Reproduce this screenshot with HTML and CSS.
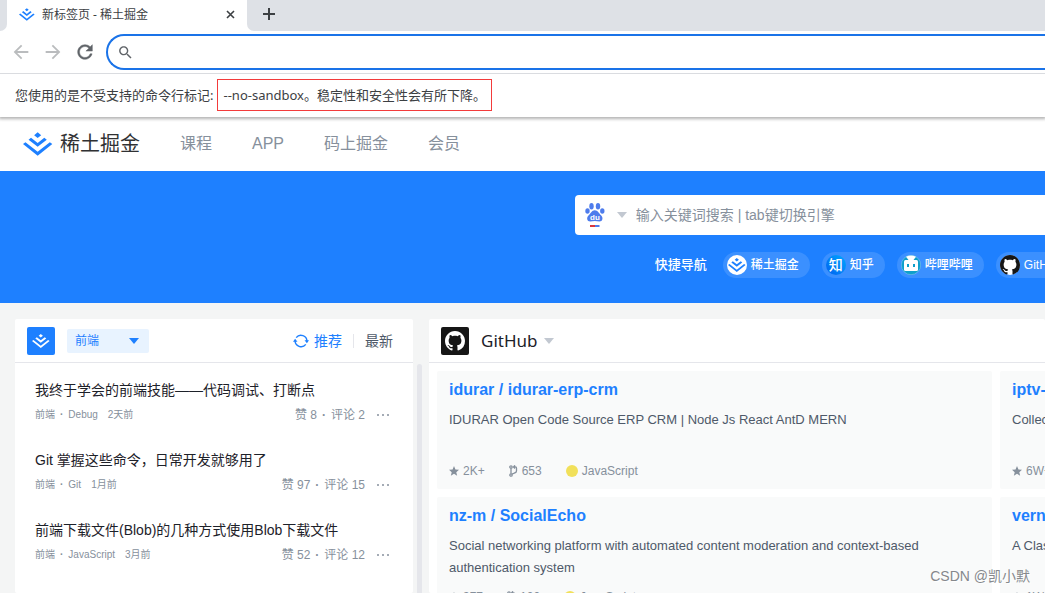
FILE: index.html
```html
<!DOCTYPE html>
<html lang="zh-CN">
<head>
<meta charset="utf-8">
<title>新标签页 - 稀土掘金</title>
<link rel="stylesheet" href="styles.css">
</head>
<body>
<svg class="sprite" aria-hidden="true">
  <symbol id="juejin" viewBox="0 0 36 28"><path d="M17.59 6.77L21.82 3.4L17.59 0L13.36 3.4ZM17.59 17.4L28.52 8.77L25.55 6.39L17.59 12.68L9.62 6.4L6.66 8.78ZM17.58 23.29L32.21 11.75L35.18 14.13L17.59 28L0 14.13L2.96 11.75Z"/></symbol>
  <symbol id="github" viewBox="0 0 16 16"><path d="M8 0C3.58 0 0 3.58 0 8c0 3.54 2.29 6.53 5.47 7.59.4.07.55-.17.55-.38 0-.19-.01-.82-.01-1.49-2.01.37-2.53-.49-2.69-.94-.09-.23-.48-.94-.82-1.13-.28-.15-.68-.52-.01-.53.63-.01 1.08.58 1.23.82.72 1.21 1.87.87 2.33.66.07-.52.28-.87.51-1.07-1.78-.2-3.64-.89-3.64-3.95 0-.87.31-1.59.82-2.15-.08-.2-.36-1.02.08-2.12 0 0 .67-.21 2.2.82.64-.18 1.32-.27 2-.27.68 0 1.36.09 2 .27 1.53-1.04 2.2-.82 2.2-.82.44 1.1.16 1.92.08 2.12.51.56.82 1.27.82 2.15 0 3.07-1.87 3.75-3.65 3.95.29.25.54.73.54 1.48 0 1.07-.01 1.93-.01 2.2 0 .21.15.46.55.38A8.013 8.013 0 0016 8c0-4.42-3.58-8-8-8z"/></symbol>
  <symbol id="star" viewBox="0 0 20 20"><path d="M10 0l2.900 6.900 7.100.6-5.400 4.800L16.300 19.500 10 15.700l-6.300 3.800 1.700-7.200L0 7.500l7.100-.6z"/></symbol>
  <symbol id="fork" viewBox="0 0 9 12"><g fill="none" stroke="currentColor" stroke-width="1.300"><circle cx="2" cy="2" r="1.200"/><circle cx="2" cy="10" r="1.200"/><path d="M2 3.300V8.700M6 .3L4.500 1.900 6 3.500M4.500 1.900h2q1 0 1 1V6q0 1.500-2 2L3 9.200"/></g></symbol>
  <symbol id="caret" viewBox="0 0 10 6"><path d="M0 0h10L5 6z"/></symbol>
</svg>

<header class="browser">
  <div class="tabs">
    <div class="tab-edge"></div>
    <div class="tab">
      <svg class="tab-logo" aria-hidden="true"><use href="#juejin"/></svg>
      <span class="tab-title">新标签页 - 稀土掘金</span>
      <button class="icon-btn tab-close" aria-label="关闭"><svg width="9" height="9" viewBox="0 0 9 9"><path d="M1 1l7 7M8 1l-7 7" stroke="#3c4043" stroke-width="1.600"/></svg></button>
    </div>
    <div class="tab-rest">
      <button class="icon-btn" aria-label="新标签页"><svg width="12" height="12" viewBox="0 0 12 12"><path d="M6 0v12M0 6h12" stroke="#3c4043" stroke-width="2"/></svg></button>
    </div>
  </div>
  <div class="toolbar">
    <button class="icon-btn" aria-label="后退"><svg width="22" height="22" viewBox="0 0 24 24" fill="#babcbe"><path d="M20 11H7.830l5.590-5.590L12 4l-8 8 8 8 1.410-1.410L7.830 13H20z"/></svg></button>
    <button class="icon-btn" aria-label="前进"><svg width="22" height="22" viewBox="0 0 24 24" fill="#babcbe"><path d="M4 11h12.170l-5.590-5.590L12 4l8 8-8 8-1.410-1.410L16.170 13H4z"/></svg></button>
    <button class="icon-btn" aria-label="刷新"><svg width="22" height="22" viewBox="0 0 24 24" fill="#5f6368" stroke="#5f6368" stroke-width=".5"><path d="M17.650 6.350C16.200 4.900 14.210 4 12 4c-4.420 0-7.990 3.580-7.990 8s3.570 8 7.990 8c3.730 0 6.840-2.550 7.730-6h-2.080c-.82 2.330-3.040 4-5.650 4-3.310 0-6-2.690-6-6s2.690-6 6-6c1.660 0 3.140.69 4.220 1.780L13 11h7V4z"/></svg></button>
    <label class="address">
      <svg width="17" height="17" viewBox="0 0 24 24" fill="#5f6368"><path d="M15.500 14h-.79l-.28-.27C15.410 12.590 16 11.110 16 9.500 16 5.910 13.090 3 9.500 3S3 5.910 3 9.500 5.910 16 9.500 16c1.610 0 3.090-.59 4.230-1.570l.27.28v.79l5 4.990L20.490 19zm-6 0C7.010 14 5 11.990 5 9.500S7.010 5 9.500 5 14 7.010 14 9.500 11.990 14 9.500 14z"/></svg>
      <input type="text" aria-label="地址栏">
    </label>
  </div>
  <div class="infobar"><span>您使用的是不受支持的命令行标记:</span><span class="flag">--no-sandbox。稳定性和安全性会有所下降。</span></div>
</header>

<nav class="site-nav">
  <a class="brand" href="#"><svg aria-hidden="true"><use href="#juejin"/></svg><span>稀土掘金</span></a>
  <a href="#">课程</a><a href="#">APP</a><a href="#">码上掘金</a><a href="#">会员</a>
</nav>

<section class="banner">
  <form class="search">
    <button type="button" class="engine" aria-label="百度">
      <svg width="20" height="24" viewBox="0 0 20 24"><g fill="#4e7cec"><ellipse cx="6.500" cy="3.300" rx="2.200" ry="3.200"/><ellipse cx="13" cy="3.300" rx="2.200" ry="3.200"/><ellipse cx="2.500" cy="8" rx="2.200" ry="2.800"/><ellipse cx="17.300" cy="8" rx="2.200" ry="2.800"/><path d="M9.800 7.300c3 0 4 3 6.200 4.900 2.600 2.200 1.600 6.300-1.500 6.300-1.600 0-3-.5-4.700-.5s-3 .5-4.600.5c-3.200 0-4.200-4.100-1.500-6.300C6 10.300 6.800 7.300 9.800 7.300z"/></g><text class="paw-text" x="10" y="17" text-anchor="middle">du</text><path d="M5 22h5v2H5z" fill="#d9363e"/><path d="M10 22h4.500v2H10z" fill="#4e7cec"/></svg>
      <svg class="caret caret-muted" aria-hidden="true"><use href="#caret"/></svg>
    </button>
    <input type="text" placeholder="输入关键词搜索 | tab键切换引擎" aria-label="搜索">
  </form>
  <div class="quick">
    <span class="quick-label">快捷导航</span>
    <a class="pill" href="#"><svg width="20" height="20" viewBox="0 0 20 20"><circle cx="10" cy="10" r="10" fill="#fff"/><use href="#juejin" x="1" y="3" width="18" height="14" fill="#1e80ff"/></svg>稀土掘金</a>
    <a class="pill" href="#"><span class="zhi">知</span>知乎</a>
    <a class="pill" href="#"><svg width="20" height="20" viewBox="0 0 20 20"><circle cx="10" cy="10" r="9.700" fill="#0e9fcb" stroke="#7cc6ea" stroke-width=".6"/><path d="M5 1.800Q10-1 15 1.800L12.500 5h-5z" fill="#fff"/><rect x="3" y="5" width="14" height="11" rx="1.500" fill="#fff"/><path d="M6 9h2v3H6zM12 9h2v3h-2z" fill="#0e9fcb"/></svg>哔哩哔哩</a>
    <a class="pill" href="#"><svg width="20" height="20" viewBox="0 0 20 20"><circle cx="10" cy="10" r="10" fill="#fff"/><use href="#github" width="20" height="20" fill="#161616"/></svg>GitHub</a>
  </div>
</section>

<main class="content">
  <section class="panel feed">
    <div class="panel-head">
      <span class="source source-blue"><svg width="18" height="14" aria-hidden="true"><use href="#juejin"/></svg></span>
      <label class="category">
        <select aria-label="分类"><option>前端</option></select>
        <svg class="caret" aria-hidden="true"><use href="#caret"/></svg>
      </label>
      <div class="sort">
        <button class="sort-btn active"><svg width="16" height="14" viewBox="0 0 16 14"><g fill="none" stroke="#1e80ff" stroke-width="1.400"><path d="M3.200 3.600A6 6 0 0 1 13.900 7.500M12.800 10.400A6 6 0 0 1 2.100 6.500"/></g><path d="M11.500 6.300H16L13.900 9.300zM0 7.700h4.500L2.100 4.700z" fill="#1e80ff"/></svg>推荐</button>
        <span class="divider"></span>
        <button class="sort-btn">最新</button>
      </div>
    </div>
    <ul class="posts">
      <li>
        <a class="post-title" href="#">我终于学会的前端技能——代码调试、打断点</a>
        <div class="post-meta"><span class="tags">前端<b>·</b>Debug</span><span class="tags">2天前</span><span class="stats">赞 8<b>·</b>评论 2</span><button class="icon-btn more" aria-label="更多"><i></i><i></i><i></i></button></div>
      </li>
      <li>
        <a class="post-title" href="#">Git 掌握这些命令，日常开发就够用了</a>
        <div class="post-meta"><span class="tags">前端<b>·</b>Git</span><span class="tags">1月前</span><span class="stats">赞 97<b>·</b>评论 15</span><button class="icon-btn more" aria-label="更多"><i></i><i></i><i></i></button></div>
      </li>
      <li>
        <a class="post-title" href="#">前端下载文件(Blob)的几种方式使用Blob下载文件</a>
        <div class="post-meta"><span class="tags">前端<b>·</b>JavaScript</span><span class="tags">3月前</span><span class="stats">赞 52<b>·</b>评论 12</span><button class="icon-btn more" aria-label="更多"><i></i><i></i><i></i></button></div>
      </li>
    </ul>
  </section>
  <div class="scroll-thumb"></div>
  <section class="panel repos">
    <div class="panel-head">
      <span class="source source-dark"><svg width="20" height="20" aria-hidden="true"><use href="#github"/></svg></span>
      <button class="source-name">GitHub<svg class="caret caret-muted" aria-hidden="true"><use href="#caret"/></svg></button>
    </div>
    <div class="repo-grid">
      <article class="repo">
        <a class="repo-name" href="#">idurar / idurar-erp-crm</a>
        <p>IDURAR Open Code Source ERP CRM | Node Js React AntD MERN</p>
        <div class="repo-stats"><span><svg class="star"><use href="#star"/></svg>2K+</span><span><svg class="fork"><use href="#fork"/></svg>653</span><span><i class="lang"></i>JavaScript</span></div>
      </article>
      <article class="repo">
        <a class="repo-name" href="#">iptv-org / iptv</a>
        <p>Collection of publicly available IPTV channels from all over the world</p>
        <div class="repo-stats"><span><svg class="star"><use href="#star"/></svg>6W+</span></div>
      </article>
      <article class="repo">
        <a class="repo-name" href="#">nz-m / SocialEcho</a>
        <p>Social networking platform with automated content moderation and context-based authentication system</p>
        <div class="repo-stats"><span><svg class="star"><use href="#star"/></svg>377</span><span><svg class="fork"><use href="#fork"/></svg>100</span><span><i class="lang"></i>JavaScript</span></div>
      </article>
      <article class="repo">
        <a class="repo-name" href="#">vernesong / OpenClash</a>
        <p>A Clash Client For OpenWrt</p>
        <div class="repo-stats"><span><svg class="star"><use href="#star"/></svg>1W+</span></div>
      </article>
    </div>
  </section>
</main>
<div class="watermark">CSDN @凯小默</div>
</body>
</html>
```
FILE: styles.css
```css
* { box-sizing: border-box; }
html, body { height: 100%; }
body {
  margin: 0;
  display: flex;
  flex-direction: column;
  overflow: hidden;
  background: #f4f5f5;
  color: #1d2129;
  font: 14px/22px "Liberation Sans", "Noto Sans CJK SC", sans-serif;
}
a { color: inherit; text-decoration: none; }
button, input, select { font: inherit; color: inherit; border: 0; padding: 0; background: none; outline: 0; }
svg { display: block; flex: none; }
.sprite { position: absolute; width: 0; height: 0; }
.icon-btn { display: flex; align-items: center; justify-content: center; }

.browser { position: relative; background: #fff; box-shadow: 0 1px 3px 1px rgba(0, 0, 0, .3); font-family: "Noto Sans", "Noto Sans CJK SC", sans-serif; }
.tabs { display: flex; height: 31px; background: #fff; }
.tab-edge { width: 7px; background: #dee1e6; border-bottom-right-radius: 7px; }
.tab { flex: none; width: 240px; display: flex; align-items: center; padding: 0 12px; height: 29px; font-size: 12px; color: #3c4043; }
.tab-logo { width: 16px; height: 13px; fill: #1e80ff; margin-right: 7px; }
.tab-close { margin-left: auto; }
.tab-rest { flex: 1; display: flex; align-items: center; padding: 0 16px 3px; background: #dee1e6; border-bottom-left-radius: 7px; }
.toolbar { display: flex; align-items: center; gap: 10px; height: 43px; padding-left: 10px; border-bottom: 1px solid #dadce0; }
.address { flex: 1; display: flex; align-items: center; gap: 8px; height: 36px; padding-left: 9px; border: 2px solid #1a73e8; border-right: 0; border-radius: 18px 0 0 18px; }
.address input { flex: 1; }
.infobar { display: flex; align-items: center; gap: 4px; height: 43px; padding: 0 0 2px 15px; font-size: 13px; color: #3c4043; white-space: nowrap; }
.flag { height: 32px; line-height: 30px; padding: 0 5px; border: 1px solid #f33b3b; }

.site-nav { display: flex; align-items: center; gap: 40px; height: 54px; padding: 0 23px 1px; background: #fff; color: #86909c; font-size: 16px; }
.brand { display: flex; align-items: center; gap: 7px; color: #303133; font-size: 20px; }
.brand svg { width: 30px; height: 24px; fill: #1e80ff; }

.banner { height: 132px; padding: 24px 0 0 55%; background: #1e80ff; }
.search { display: flex; align-items: center; height: 40px; background: #fff; border-radius: 4px 0 0 4px; }
.search input { flex: 1; min-width: 0; }
.search input::placeholder { color: #86909c; opacity: 1; }
.engine { display: flex; align-items: center; gap: 12px; padding: 0 9px 0 10px; }
.paw-text { font: bold 8px "Liberation Sans", sans-serif; fill: #fff; }
.caret { width: 10px; height: 6px; fill: #1e80ff; }
.caret-muted { fill: #c2c8d1; }
.quick { display: flex; align-items: center; gap: 12px; margin-top: 17px; padding-left: 80px; color: #fff; font-size: 12px; font-weight: 500; white-space: nowrap; overflow: hidden; }
.quick-label { font-size: 13px; margin-right: 4px; }
.pill { flex: none; display: flex; align-items: center; gap: 4px; height: 26px; padding: 0 11px 0 4px; border-radius: 13px; background: rgba(255, 255, 255, .13); }
.zhi { width: 20px; height: 20px; border-radius: 50%; background: linear-gradient(225deg, #00a8ff, #0060f0); font-size: 14px; line-height: 20px; text-align: center; }

.content { flex: 1; min-height: 0; display: flex; padding: 16px 0 0 15px; overflow: hidden; }
.panel { background: #fff; border-radius: 2px; }
.panel-head { display: flex; align-items: center; height: 44px; padding: 0 20px 0 12px; border-bottom: 1px solid #e5e6eb; }
.feed { flex: none; width: 398px; }
.source { display: flex; align-items: center; justify-content: center; width: 28px; height: 28px; border-radius: 2px; fill: #fff; }
.source-blue { background: #1e80ff; }
.source-dark { background: #161616; }
.category { position: relative; margin-left: 12px; }
.category select { display: block; width: 82px; height: 24px; padding: 0 8px; appearance: none; border-radius: 2px; background: #e8f3ff; color: #1e80ff; font-size: 12px; }
.category .caret { position: absolute; right: 10px; top: 9px; pointer-events: none; }
.sort { display: flex; align-items: center; margin-left: auto; gap: 11px; }
.sort-btn { display: flex; align-items: center; gap: 5px; color: #4e5969; }
.active { color: #1e80ff; }
.divider { width: 1px; height: 14px; background: #e5e6eb; }
.posts { list-style: none; margin: 0; padding: 16px 20px 0; }
.posts li { height: 70px; }
.post-title { display: block; }
.post-meta { display: flex; align-items: center; gap: 10px; margin-top: 3px; color: #86909c; font-size: 12px; }
.post-meta b { margin: 0 5px; }
.tags { font-size: 10px; }
.stats { margin-left: auto; }
.more { gap: 3px; width: 16px; margin-right: 2px; }
.more i { width: 2px; height: 2px; background: #a5acb6; }
.scroll-thumb { flex: none; width: 5px; margin: 45px 7px 0 4px; border-radius: 3px 3px 0 0; background: #e5e6eb; }

.repos { flex: 1; min-width: 0; overflow: hidden; }
.source-name { display: flex; align-items: center; gap: 7px; margin-left: 12px; font-family: "Noto Sans", sans-serif; font-size: 17px; }
.repo-grid { display: grid; grid-template-columns: repeat(2, 555px); gap: 8px; padding: 8px; }
.repo { padding: 8px 12px 10px; border-radius: 2px; background: #f9fafa; }
.repo-name { display: block; color: #1e80ff; font-size: 16px; font-weight: bold; }
.repo p { min-height: 44px; margin: 8px 0 10px; color: #4e5969; font-size: 13px; }
.repo-stats { display: flex; gap: 24px; color: #86909c; fill: #86909c; font-size: 12px; line-height: 16px; }
.repo-stats span { display: flex; align-items: center; gap: 4px; }
.star { width: 10px; height: 10px; }
.fork { width: 9px; height: 12px; }
.lang { width: 12px; height: 12px; border-radius: 50%; background: #f1e05a; }

.watermark { position: absolute; right: 15px; bottom: 6px; color: #85888c; font-size: 14px; text-shadow: 1px 1px 0 #fff; }
```
